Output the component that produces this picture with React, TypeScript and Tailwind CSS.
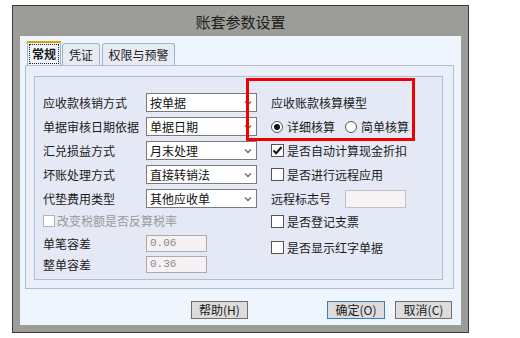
import React from "react";

const FONT = "font-['Noto_Sans_CJK_SC','Noto_Sans',sans-serif]";

function Chevron() {
  return (
    <svg width="8" height="6" viewBox="0 0 8 6" className="shrink-0">
      <path d="M1 1.5 L4 4.5 L7 1.5" fill="none" stroke="#6e6e6e" strokeWidth="1.4" />
    </svg>
  );
}

function Select({ value }: { value: string }) {
  return (
    <div className="w-[111px] h-[19px] bg-white border border-[#7a7a7a] flex items-center justify-between pl-[3px] pr-[4px] text-[12px] leading-none text-[#111]">
      <span>{value}</span>
      <Chevron />
    </div>
  );
}

function Field({ label, value }: { label: string; value: string }) {
  return (
    <div className="flex items-center h-[17px]">
      <span className="w-[103px] text-[12px] leading-none">{label}</span>
      <div className="w-[61px] h-[17px] bg-[#f5f1f5] border border-[#ababab] flex items-center pl-[3px] text-[11px] leading-none text-[#8a8a8a] font-['Liberation_Mono',monospace]">
        {value}
      </div>
    </div>
  );
}

function Check({ label, checked }: { label: string; checked?: boolean }) {
  return (
    <div className="flex items-center h-[19px]">
      <div className="w-[13px] h-[13px] bg-white border border-[#555] flex items-center justify-center">
        {checked && (
          <svg width="11" height="11" viewBox="0 0 11 11">
            <path d="M1.5 5.5 L4.2 8.3 L9.5 2" fill="none" stroke="#111" strokeWidth="2" />
          </svg>
        )}
      </div>
      <span className="ml-[3px] text-[12px] leading-none">{label}</span>
    </div>
  );
}

function Radio({ label, checked }: { label: string; checked?: boolean }) {
  return (
    <div className="flex items-center">
      <div className="w-[12px] h-[12px] rounded-full bg-white border border-[#555] flex items-center justify-center">
        {checked && <div className="w-[6px] h-[6px] rounded-full bg-[#111]" />}
      </div>
      <span className="ml-[4px] text-[12px] leading-none">{label}</span>
    </div>
  );
}

const SELECTS: [string, string][] = [
  ["应收款核销方式", "按单据"],
  ["单据审核日期依据", "单据日期"],
  ["汇兑损益方式", "月末处理"],
  ["坏账处理方式", "直接转销法"],
  ["代垫费用类型", "其他应收单"],
];

export default function App() {
  return (
    <div className={`relative w-[520px] h-[338px] bg-white pt-[5px] pl-[12px] text-[#1a1a1a] ${FONT}`}>
      <div className="w-[457px] h-[328px] border border-[#3b3b3b] bg-[#9c9d99] flex flex-col px-[7px] pb-[7px]">
        <div className="h-[30px] shrink-0 flex items-center justify-center text-[15px] leading-none text-[#1c1c1c]">
          账套参数设置
        </div>

        <div className="flex-1 bg-[#eef5fd] flex flex-col pl-[5px] pr-[7px] pt-[5px]">
          {/* Tabs */}
          <div className="flex items-end h-[24px] shrink-0">
            <div className="ml-[2px] w-[34px] h-[24px] bg-[#eef5fd] border-t-2 border-t-[#d9a400] border-x border-[#9fb3c9] flex items-stretch p-[1px]">
              <div className="flex-1 border border-dotted border-[#222] flex items-center justify-center text-[12px] font-bold leading-none">
                常规
              </div>
            </div>
            <div className="ml-[1px] w-[38px] h-[22px] bg-[#e6ebf4] border border-b-0 border-[#9fb3c9] rounded-t-[3px] flex items-center justify-center text-[12px] leading-none">
              凭证
            </div>
            <div className="ml-[2px] w-[73px] h-[22px] bg-[#e6ebf4] border border-b-0 border-[#9fb3c9] rounded-t-[3px] flex items-center justify-center text-[12px] leading-none">
              权限与预警
            </div>
          </div>

          {/* Panel */}
          <div className="h-[224px] shrink-0 bg-[#e9eef8] border border-[#a9bdd3] pt-[10px] pl-[8px] pr-[10px]">
            <div className="h-[204px] bg-[#e4e9f5] border border-[#a8c0d8] flex pl-[8px] pt-[16px]">
              {/* Left column */}
              <div className="w-[228px] flex flex-col">
                <div className="flex flex-col gap-[5px]">
                  {SELECTS.map(([label, value]) => (
                    <div key={label} className="flex items-center h-[19px]">
                      <span className="w-[103px] text-[12px] leading-none">{label}</span>
                      <Select value={value} />
                    </div>
                  ))}
                </div>
                <div className="mt-[6px] h-[14px] flex items-center">
                  <div className="w-[12px] h-[12px] bg-white border border-[#b4b4b4]" />
                  <span className="ml-[2px] text-[12px] leading-none text-[#9a9a9a]">改变税额是否反算税率</span>
                </div>
                <div className="mt-[7px]">
                  <Field label="单笔容差" value="0.06" />
                </div>
                <div className="mt-[4px]">
                  <Field label="整单容差" value="0.36" />
                </div>
              </div>

              {/* Right column */}
              <div className="flex flex-col">
                <div className="flex flex-col gap-[5px]">
                  <div className="h-[19px] flex items-center text-[12px] leading-none">应收账款核算模型</div>
                  <div className="h-[19px] flex items-center gap-[10px]">
                    <Radio label="详细核算" checked />
                    <Radio label="简单核算" />
                  </div>
                  <Check label="是否自动计算现金折扣" checked />
                  <Check label="是否进行远程应用" />
                  <div className="h-[19px] flex items-center">
                    <span className="w-[74px] text-[12px] leading-none">远程标志号</span>
                    <div className="w-[61px] h-[18px] bg-[#f6f2f6] border border-[#c2c2c2]" />
                  </div>
                </div>
                <div className="mt-[4px]">
                  <Check label="是否登记支票" />
                </div>
                <div className="mt-[7px]">
                  <Check label="是否显示红字单据" />
                </div>
              </div>
            </div>
          </div>

          {/* Buttons */}
          <div className="mt-[12px] flex justify-end pr-[2px]">
            <button className="w-[57px] h-[18px] bg-[#dcdcdc] border border-[#6f6f6f] text-[12px] leading-none mr-[79px]">
              帮助(H)
            </button>
            <button className="w-[58px] h-[18px] bg-[#dcdcdc] border border-[#3b7fb4] text-[12px] leading-none mr-[10px]">
              确定(O)
            </button>
            <button className="w-[57px] h-[18px] bg-[#dcdcdc] border border-[#6f6f6f] text-[12px] leading-none">
              取消(C)
            </button>
          </div>
        </div>
      </div>

      {/* red annotation */}
      <div className="absolute left-[246px] top-[78px] w-[169px] h-[63px] border-[3px] border-[#f00000]" />
    </div>
  );
}
